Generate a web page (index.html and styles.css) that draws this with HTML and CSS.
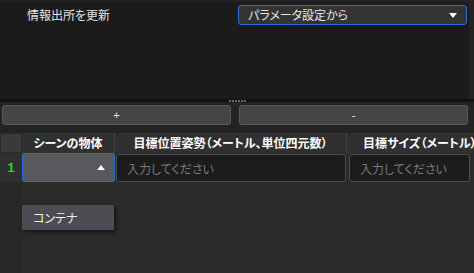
FILE: index.html
```html
<!DOCTYPE html>
<html>
<head>
<meta charset="utf-8">
<link rel="stylesheet" href="styles.css">
</head>
<body>
<div class="app">
  <div class="top">
    <div class="top-inner">
      <div class="form-row">
        <span class="label">情報出所を更新</span>
        <div class="combo">
          <span>パラメータ設定から</span>
          <svg class="arrow" width="8" height="5" viewBox="0 0 8 5"><path d="M0 0H8L4 5Z" fill="#fff"/></svg>
        </div>
      </div>
    </div>
    <div class="vscroll"></div>
  </div>
  <div class="splitter">
    <div class="grip"><i></i><i></i><i></i><i></i><i></i><i></i></div>
  </div>
  <div class="buttons">
    <div class="btn">+</div>
    <div class="btn">-</div>
  </div>
  <div class="table">
    <div class="thead">
      <div class="corner"></div>
      <div class="th c1">シーンの物体</div>
      <div class="th c2">目標位置姿勢（メートル、単位四元数）</div>
      <div class="th c3">目標サイズ（メートル）</div>
    </div>
    <div class="trow">
      <div class="rowhead">1</div>
      <div class="cell c1">
        <div class="cellcombo">
          <svg width="8" height="5" viewBox="0 0 8 5"><path d="M0 5H8L4 0Z" fill="#fff"/></svg>
        </div>
      </div>
      <div class="cell c2"><div class="edit">入力してください</div></div>
      <div class="cell c3"><div class="edit">入力してください</div></div>
    </div>
    <div class="tbody">
      <div class="vhead"></div>
    </div>
    <div class="popup">
      <div class="item">コンテナ</div>
    </div>
  </div>
</div>
</body>
</html>
```
FILE: styles.css
```css
* { box-sizing: border-box; }
html, body { margin: 0; padding: 0; }
body {
  width: 474px; height: 273px; overflow: hidden;
  background: #1b1b1b;
  font-family: "Noto Sans CJK JP", "Noto Sans", sans-serif;
  font-feature-settings: "palt";
  font-size: 12px;
  color: #e0e0e0;
}
.app { display: flex; flex-direction: column; height: 273px; }
.top {
  height: 99px; display: flex;
  border-top: 2px solid #232323;
  background: #1b1b1b;
}
.top-inner { flex: 1; padding-top: 3px; }
.vscroll { width: 5px; background: #232323; }
.form-row { display: flex; align-items: center; height: 20px; }
.label { width: 238px; padding-left: 27px; color: #e6e6e6; line-height: 20px; }
.combo {
  width: 229px; height: 20px;
  border: 1px solid #2c6fd0; border-radius: 3px;
  background: #333333;
  display: flex; align-items: center; justify-content: space-between;
  padding: 0 9px 0 9px;
  color: #e6e6e6;
}
.combo span { line-height: 18px; }
.splitter {
  height: 3px; background: #111111; position: relative;
  display: flex; justify-content: center;
}
.grip { display: flex; gap: 1px; margin-left: 0px; padding-top: 1px; }
.grip i { display: block; width: 2px; height: 2px; background: #6a6a6a; }
.buttons {
  height: 31px; background: #232323;
  display: flex; gap: 8px; padding: 3px 6px 0 2px;
}
.btn {
  flex: 1; height: 20px;
  background: #454545; border: 1px solid #5a5a5a; border-radius: 3px;
  color: #f0f0f0; font-family: "Liberation Sans", sans-serif; font-size: 11px;
  display: flex; align-items: center; justify-content: center;
}
.table { flex: 1; background: #2b2b2b; position: relative; display: flex; flex-direction: column; }
.thead { display: flex; height: 20px; background: #303030; }
.corner { width: 22px; background: #3a3a3a; border: 1px solid #2a2a2a; }
.th {
  color: #ffffff; font-weight: bold; font-size: 12px;
  display: flex; align-items: center; justify-content: center;
  border-right: 1px solid #424242; line-height: 20px; white-space: nowrap; overflow: hidden;
}
.c1 { width: 93px; }
.c2 { width: 232px; }
.c3 { flex: 1; justify-content: flex-start; padding-left: 16px; border-right: none; }
.trow { display: flex; height: 30px; }
.rowhead {
  width: 22px; background: #2f2f2f; color: #22dd22;
  font-family: "Liberation Sans", sans-serif; font-weight: bold; font-size: 13px;
  display: flex; align-items: center; justify-content: center;
  border-bottom: 1px solid #262626;
}
.cell { display: flex; }
.cell.c1 { padding: 0 0 1px 0; }
.cellcombo {
  flex: 1; background: #58595d; border: 1px solid #2a6bd0; border-radius: 2px;
  display: flex; align-items: center; justify-content: flex-end; padding-right: 9px;
}
.cell.c2 { padding: 1px 1px 1px 1px; }
.cell.c3 { padding: 1px 4px 1px 2px; }
.edit {
  flex: 1; background: #1c1c1c; border: 1px solid #4b4b4b; border-radius: 3px;
  color: #7a7a7a; padding-left: 10px; display: flex; align-items: center;
  white-space: nowrap; overflow: hidden;
}
.tbody { flex: 1; display: flex; }
.vhead { width: 22px; background: #282828; }
.popup {
  position: absolute; left: 22px; top: 72px; width: 92px; height: 25px;
  background: #4c4d52;
  box-shadow: 2px 2px 4px rgba(0,0,0,0.55);
  display: flex; align-items: center;
}
.item { padding-left: 11px; color: #f0f0f0; }
```
